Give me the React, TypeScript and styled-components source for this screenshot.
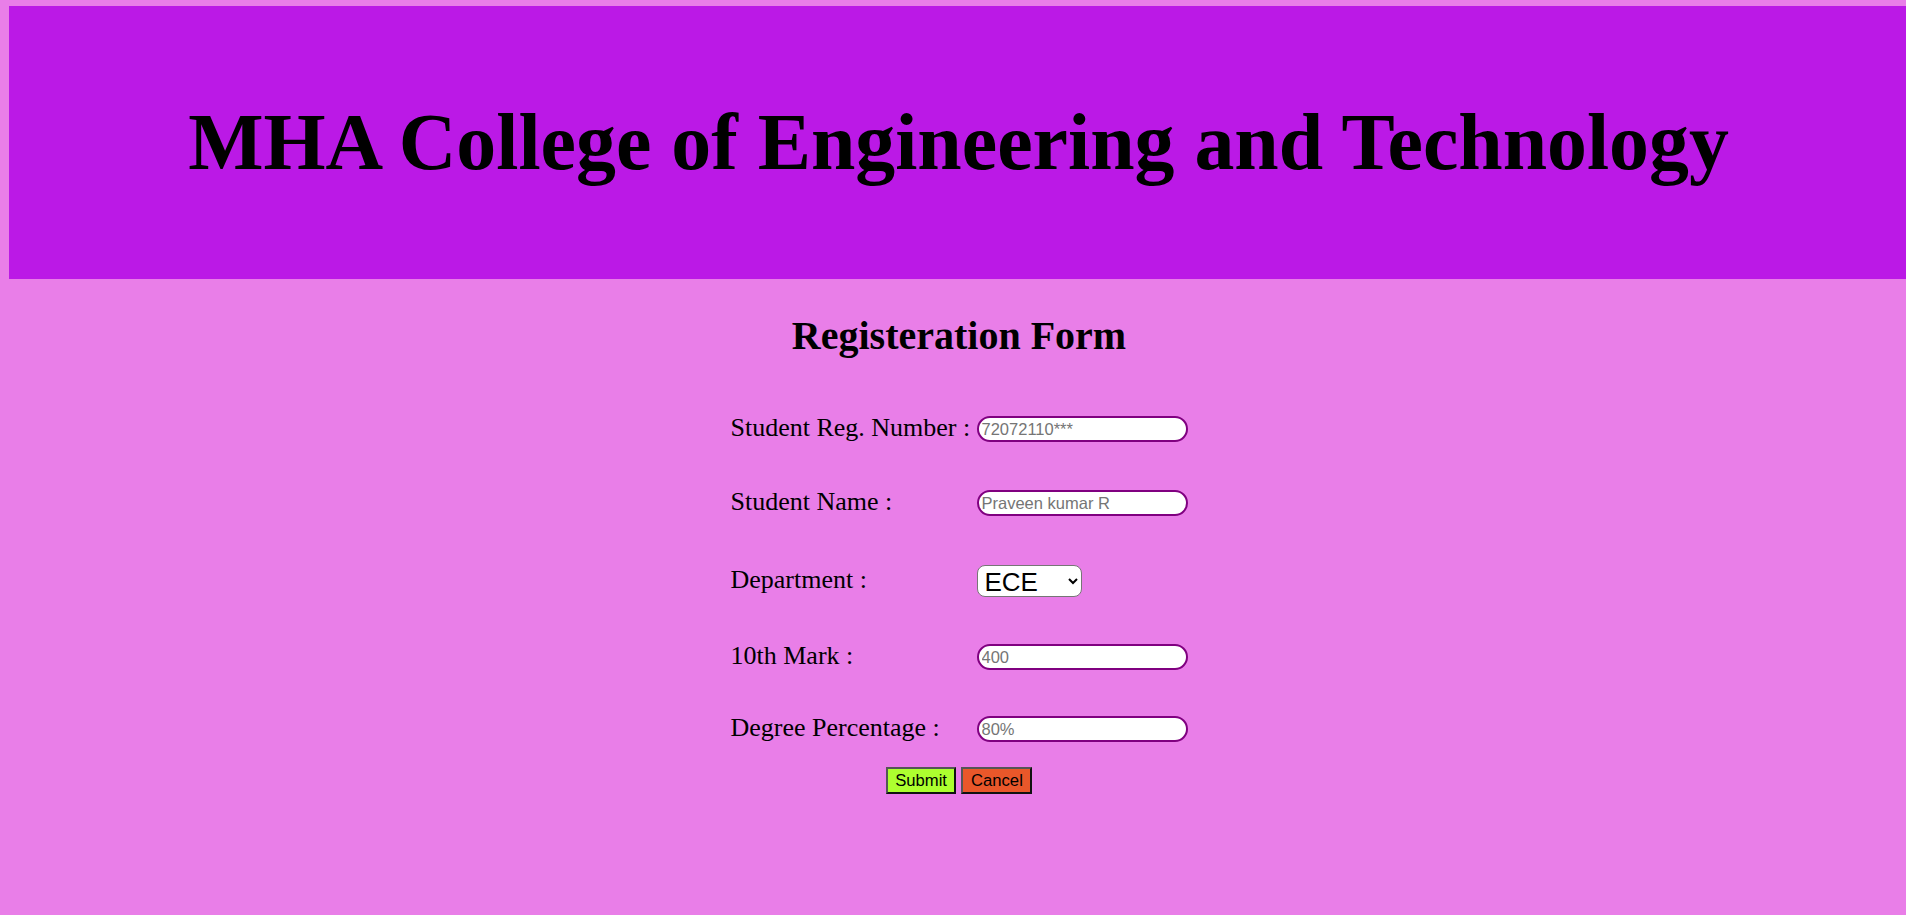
import React from "react";
import styled, { createGlobalStyle } from "styled-components";

const GlobalStyle = createGlobalStyle`
  html, body {
    margin: 0;
    padding: 0;
    background: #e97ee8;
    overflow: hidden;
  }
  * { box-sizing: border-box; }
`;

const Page = styled.div`
  padding: 6px 0 0 9px;
  min-height: 915px;
  font-family: "Liberation Serif", "Times New Roman", serif;
  color: #000;
`;

const Header = styled.header`
  height: 273px;
  background: #bb19e6;
  display: flex;
  align-items: center;
  justify-content: center;
`;

const Title = styled.h1`
  margin: 0 0 0 2px;
  font-size: 79.8px;
  font-weight: bold;
  line-height: 1;
`;

const Main = styled.main`
  display: flex;
  flex-direction: column;
  align-items: center;
  padding-left: 3px;
`;

const FormTitle = styled.h2`
  margin: 33px 0 0;
  font-size: 40px;
  font-weight: bold;
  line-height: normal;
`;

const Form = styled.form`
  display: flex;
  flex-direction: column;
  margin-top: 57px;
`;

const Row = styled.div<{ $top: number }>`
  display: grid;
  grid-template-columns: 246px 211px;
  align-items: center;
  margin-top: ${(p) => p.$top}px;
`;

const Label = styled.label`
  font-size: 26px;
  line-height: 22px;
  padding-bottom: 2px;
  white-space: nowrap;
`;

const TextInput = styled.input`
  width: 211px;
  height: 26px;
  border: 2px solid #800080;
  border-radius: 13px;
  background: #fff;
  padding: 0 3px;
  font-family: "Liberation Sans", Arial, sans-serif;
  font-size: 16.5px;
  outline: none;
  &::placeholder {
    color: #757575;
  }
`;

const Select = styled.select`
  width: 105px;
  height: 32px;
  border: 1px solid #767676;
  border-radius: 8px;
  background: #fff;
  padding: 0 3px;
  font-family: "Liberation Sans", Arial, sans-serif;
  font-size: 26px;
  color: #000;
`;

const Buttons = styled.div`
  display: flex;
  justify-content: center;
  gap: 5px;
  margin-top: 25px;
`;

const Button = styled.button<{ $bg: string }>`
  height: 27px;
  padding: 0 7.5px;
  border: 2px solid;
  border-color: #555 #111 #111 #555;
  background: ${(p) => p.$bg};
  font-family: "Liberation Sans", Arial, sans-serif;
  font-size: 16.67px;
  color: #000;
  cursor: pointer;
`;

const fields = [
  { label: "Student Reg. Number :", placeholder: "72072110***", top: 0 },
  { label: "Student Name :", placeholder: "Praveen kumar R", top: 48 },
];

const fieldsAfter = [
  { label: "10th Mark :", placeholder: "400", top: 47 },
  { label: "Degree Percentage :", placeholder: "80%", top: 46 },
];

export default function App() {
  return (
    <>
      <GlobalStyle />
      <Page>
        <Header>
          <Title>MHA College of Engineering and Technology</Title>
        </Header>
        <Main>
          <FormTitle>Registeration Form</FormTitle>
          <Form onSubmit={(e) => e.preventDefault()}>
            {fields.map((f) => (
              <Row key={f.label} $top={f.top}>
                <Label>{f.label}</Label>
                <TextInput placeholder={f.placeholder} />
              </Row>
            ))}
            <Row $top={49}>
              <Label>Department :</Label>
              <Select defaultValue="ECE">
                <option>ECE</option>
                <option>CSE</option>
                <option>EEE</option>
                <option>MECH</option>
                <option>CIVIL</option>
              </Select>
            </Row>
            {fieldsAfter.map((f) => (
              <Row key={f.label} $top={f.top}>
                <Label>{f.label}</Label>
                <TextInput placeholder={f.placeholder} />
              </Row>
            ))}
            <Buttons>
              <Button type="submit" $bg="#adff2f">Submit</Button>
              <Button type="button" $bg="#e9572a">Cancel</Button>
            </Buttons>
          </Form>
        </Main>
      </Page>
    </>
  );
}
